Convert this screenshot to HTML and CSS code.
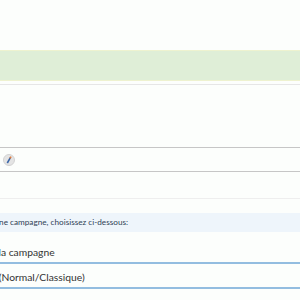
FILE: index.html
```html
<!DOCTYPE html>
<html lang="fr">
<head>
    <meta charset="UTF-8">
    <title>Campagne</title>
    <link rel="stylesheet" href="styles.css">
</head>
<body>
<div class="page">
    <div class="top-space"></div>
    <div class="notice"></div>
    <div class="rule-light"></div>

    <div class="gap-a"></div>
    <div class="tool-row">
        <span class="edit-icon">
            <svg width="12" height="12" viewBox="0 0 12 12">
                <circle cx="6" cy="6" r="5.5" fill="#e4e4e4" stroke="#d2d2d2" stroke-width="1"/>
                <line x1="4.3" y1="9" x2="7.4" y2="3.6" stroke="#3a66a8" stroke-width="1.6"/>
                <line x1="7" y1="4.3" x2="8" y2="2.6" stroke="#e07a3a" stroke-width="1.6"/>
            </svg>
        </span>
    </div>
    <div class="rule-faint"></div>

    <!-- Choix de campagne -->
    <div class="info"><span class="info-text">Si vous souhaitez associer une campagne, choisissez ci-dessous:</span></div>
    <div class="field field-first">
        <label class="field-label label-nom">Nom de la campagne</label>
    </div>
    <div class="field">
        <label class="field-label label-type">Type de campagne (Normal/Classique)</label>
    </div>
</div>
</body>
</html>
```

FILE: styles.css
```css
body {
    margin: 0;
    padding: 0;
    background-color: #fcfefc;
    font-family: Lato, sans-serif;
    overflow: hidden;
}
.page {
    width: 300px;
}
.top-space {
    height: 50px;
}
.notice {
    height: 29px;
    background-color: #dfeed7;
    border-top: 1px solid #eef2cf;
    border-bottom: 1px solid #eef2cf;
}
.rule-light {
    margin-top: 3px;
    border-top: 1px solid #e6e6e6;
}
.gap-a {
    height: 62px;
}
.tool-row {
    display: flex;
    align-items: center;
    height: 23px;
    border-top: 1px solid #c6c6c6;
    border-bottom: 1px solid #c6c6c6;
    padding-left: 3px;
}
.edit-icon {
    display: flex;
}
.rule-faint {
    margin-top: 26px;
    border-top: 1px solid #eeeeee;
}
.info {
    margin-top: 14px;
    height: 19px;
    line-height: 19px;
    background-color: #eef5fb;
    font-size: 8.2px;
    color: #2f3f55;
    white-space: nowrap;
    overflow: hidden;
}
.info-text {
    display: inline-block;
    margin-left: -100px;
}
.field {
    height: 20px;
    padding-top: 3px;
    display: flex;
    align-items: center;
    border-bottom: 2px solid #93bde0;
    white-space: nowrap;
    overflow: hidden;
}
.field-first {
    margin-top: 7px;
}
.field-label {
    font-size: 10.3px;
    color: #333;
}
.label-nom {
    margin-left: -40px;
}
.label-type {
    margin-left: -88px;
}
```
